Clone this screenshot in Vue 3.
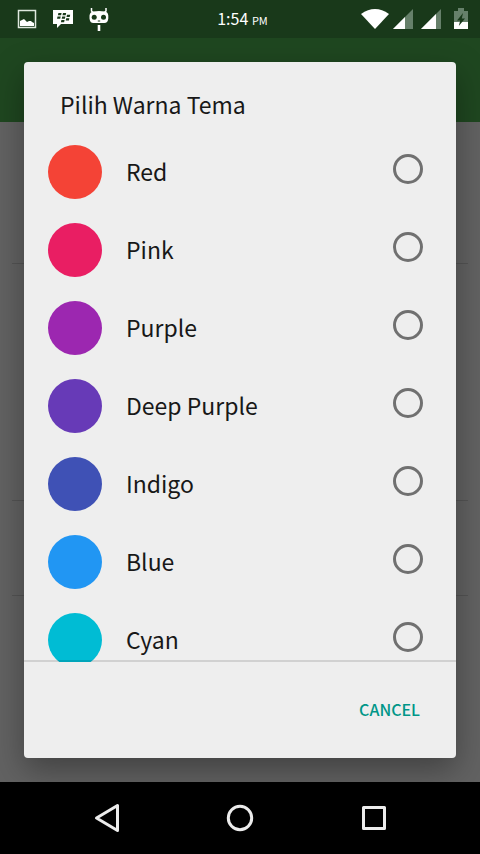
<script setup>
import { ref } from 'vue'

const selected = ref('')
const colors = [
  { name: 'Red', value: '#f44336' },
  { name: 'Pink', value: '#e91e63' },
  { name: 'Purple', value: '#9c27b0' },
  { name: 'Deep Purple', value: '#673ab7' },
  { name: 'Indigo', value: '#3f51b5' },
  { name: 'Blue', value: '#2196f3' },
  { name: 'Cyan', value: '#00bcd4' }
]
</script>

<template>
  <div class="screen">
    <header class="status">
      <div class="notifications">
        <svg width="20" height="20" viewBox="0 0 20 20">
          <path d="M1.500 1.500h17v17h-17z" fill="none" stroke="#dfe8df" stroke-width="1.5" />
          <path d="M3 17v-5l2-1 2-1 2 2 1 1 2-1 2 0 1 1 2 1v3z" fill="#fff" />
        </svg>
        <svg width="22" height="20" viewBox="0 0 22 20">
          <path d="M1 1h20v14H9l-4 4v-4H1z" fill="#fff" />
          <path d="M6.400 4h3.200l-.5 2.200H5.900zM11 4h3.200l-.5 2.200h-3.200zM5.500 7.500h3.200l-.5 2.200H5zM10.200 7.500h3.200l-.5 2.200H9.700zM15 5.700h3.200l-.5 2.200h-3.200zM14.200 9.200h3.200l-.5 2.200h-3.200zM9.400 11h3.200l-.5 2.200H8.900z" fill="#19391a" />
        </svg>
        <svg width="20" height="24" viewBox="0 0 20 24">
          <path d="M2.500 1v3l2 2M17 1v3l-2 2" fill="none" stroke="#fff" stroke-width="1.500" />
          <path d="M4 4.500q6-1 12 0 3 .5 3.300 4v3q-.5 4.500-4 4.500h-11Q1 16 .5 11.500v-3Q1 5 4 4.500zM8.700 18h2.600v6H8.700z" fill="#fff" />
          <circle cx="5.200" cy="10.200" r="2.500" fill="#19391a" />
          <circle cx="14.500" cy="10.200" r="2.500" fill="#19391a" />
          <path d="M8.800 14h2.400" stroke="#19391a" />
        </svg>
      </div>
      <time class="clock">1:54 <small>PM</small></time>
      <div class="signals">
        <svg width="30" height="22" viewBox="0 0 30 22">
          <path d="M1 6Q15-4 29 6L15 21z" fill="#fff" />
        </svg>
        <svg width="22" height="22" viewBox="0 0 22 22">
          <path d="M1 21L21 1v20z" fill="#66806a" />
          <path d="M1 21L13 9v12z" fill="#fff" />
        </svg>
        <svg width="22" height="22" viewBox="0 0 22 22">
          <path d="M1 21L21 1v20z" fill="#66806a" />
          <path d="M1 21L16 6v15z" fill="#fff" />
        </svg>
        <svg class="battery" width="14" height="22" viewBox="0 0 14 22">
          <path d="M0 3h4V0h6v3h4v12H0z" fill="#66806a" />
          <path d="M0 14h14v7H0z" fill="#fff" />
          <path d="M9 5l-6 7.500h3.200L4.800 18 11 10.500H7.800z" fill="#19391a" />
        </svg>
      </div>
    </header>

    <main class="stage">
      <div class="toolbar"></div>
      <div class="section first"></div>
      <div class="section tall"></div>
      <div class="section"></div>

      <div class="overlay">
        <form class="dialog" role="dialog" aria-labelledby="dialog-title" @submit.prevent>
          <h1 id="dialog-title">Pilih Warna Tema</h1>
          <div class="list">
            <label v-for="color in colors" :key="color.name" class="row">
              <span class="swatch" :style="{ background: color.value }"></span>
              <span class="name">{{ color.name }}</span>
              <input v-model="selected" type="radio" name="theme" :value="color.name" />
            </label>
          </div>
          <div class="actions">
            <button type="button">CANCEL</button>
          </div>
        </form>
      </div>
    </main>

    <nav class="navbar">
      <button type="button" aria-label="Back">
        <svg width="32" height="32" viewBox="0 0 32 32">
          <path d="M6.500 16L27.500 3.500v25z" />
        </svg>
      </button>
      <button type="button" aria-label="Home">
        <svg width="32" height="32" viewBox="0 0 32 32">
          <circle cx="16" cy="16" r="11.700" />
        </svg>
      </button>
      <button type="button" aria-label="Recent">
        <svg width="32" height="32" viewBox="0 0 32 32">
          <path d="M5.500 5.500h21v21h-21z" />
        </svg>
      </button>
    </nav>
  </div>
</template>

<style>
body {
  background: #000;
}
</style>

<style scoped>
.screen {
  display: flex;
  flex-direction: column;
  height: 100vh;
  font-family: "Noto Sans CJK SC", sans-serif;
  color: #181818;
}

.status {
  display: grid;
  grid-template-columns: 1fr auto 1fr;
  align-items: center;
  height: 38px;
  padding: 0 12px 0 17px;
  box-sizing: border-box;
  background: #19391a;
}

.notifications {
  display: flex;
  align-items: center;
  gap: 15px;
}

.clock {
  font-size: 16px;
  line-height: 24px;
  color: #fff;
}

.clock small {
  font-size: 11px;
}

.signals {
  display: flex;
  align-items: center;
  justify-content: flex-end;
  gap: 6px;
}

.signals svg:first-child {
  margin-right: -4px;
}

.battery {
  margin-left: 6px;
}

.stage {
  position: relative;
  flex: 1;
  min-height: 0;
  overflow: hidden;
  background: #626262;
}

.toolbar {
  height: 84px;
  background: #1f4720;
}

.section {
  height: 94px;
  margin: 0 12px;
  border-bottom: 1px solid #545454;
}

.section.first {
  height: 141px;
}

.section.tall {
  height: 236px;
}

.overlay {
  position: absolute;
  inset: 0;
  display: flex;
  padding: 24px;
}

.dialog {
  display: flex;
  flex: 1;
  flex-direction: column;
  min-height: 0;
  border-radius: 4px;
  background: #eee;
  box-shadow: 0 12px 32px rgba(0, 0, 0, 0.34);
}

h1 {
  margin: 0;
  padding: 25px 36px 12px;
  font-size: 23px;
  font-weight: 400;
  line-height: 34px;
}

.list {
  position: relative;
  flex: 1;
  min-height: 0;
  overflow: hidden;
}

.list::after {
  content: "";
  position: absolute;
  inset: auto 0 0;
  height: 2px;
  background: rgba(0, 0, 0, 0.12);
}

.row {
  display: flex;
  align-items: center;
  gap: 24px;
  height: 78px;
  padding: 0 33px 0 24px;
}

.swatch {
  width: 54px;
  height: 54px;
  border-radius: 50%;
}

.name {
  flex: 1;
  padding-bottom: 2px;
  font-size: 23px;
  line-height: 34px;
}

input {
  appearance: none;
  width: 30px;
  height: 30px;
  margin: 0 0 6px;
  border: 3px solid #707070;
  border-radius: 50%;
}

input:checked {
  border-color: #009688;
  background: radial-gradient(#009688 45%, transparent 50%);
}

.actions {
  display: flex;
  align-items: center;
  justify-content: flex-end;
  height: 96px;
  padding: 0 24px;
}

button {
  border: 0;
  background: none;
  font-family: inherit;
}

.actions button {
  padding: 12px 12px 14px;
  font-size: 16px;
  font-weight: 500;
  line-height: 24px;
  color: #009688;
}

.navbar {
  display: flex;
  align-items: center;
  justify-content: center;
  gap: 70px;
  height: 72px;
  background: #000;
}

.navbar button {
  display: flex;
  justify-content: center;
  width: 64px;
  padding: 0;
}

.navbar svg {
  fill: none;
  stroke: #ececec;
  stroke-width: 3;
  stroke-linejoin: round;
}
</style>
